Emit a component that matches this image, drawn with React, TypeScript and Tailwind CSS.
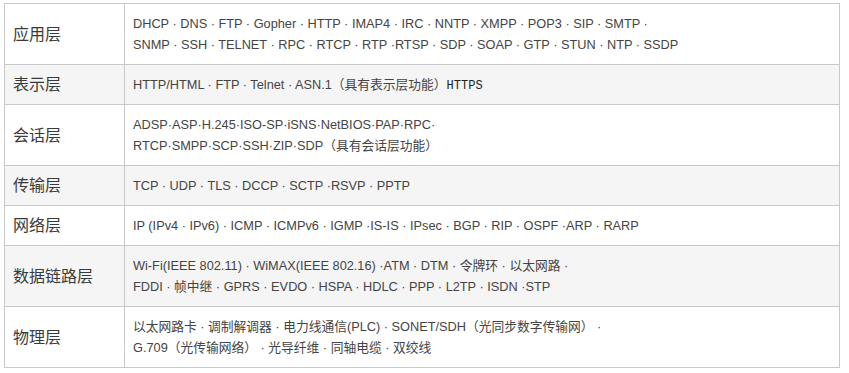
const rows: { label: string; lines: React.ReactNode[] }[] = [
  {
    label: "应用层",
    lines: [
      "DHCP · DNS · FTP · Gopher · HTTP · IMAP4 · IRC · NNTP · XMPP · POP3 · SIP · SMTP ·",
      "SNMP · SSH · TELNET · RPC · RTCP · RTP ·RTSP · SDP · SOAP · GTP · STUN · NTP · SSDP",
    ],
  },
  {
    label: "表示层",
    lines: [
      <>
        HTTP/HTML · FTP · Telnet · ASN.1（具有表示层功能）
        <span className="font-['Liberation_Mono',monospace] text-[12px] leading-none text-[#222]">HTTPS</span>
      </>,
    ],
  },
  {
    label: "会话层",
    lines: [
      "ADSP·ASP·H.245·ISO-SP·iSNS·NetBIOS·PAP·RPC·",
      "RTCP·SMPP·SCP·SSH·ZIP·SDP（具有会话层功能）",
    ],
  },
  {
    label: "传输层",
    lines: ["TCP · UDP · TLS · DCCP · SCTP ·RSVP · PPTP"],
  },
  {
    label: "网络层",
    lines: ["IP (IPv4 · IPv6) · ICMP · ICMPv6 · IGMP ·IS-IS · IPsec · BGP · RIP · OSPF ·ARP · RARP"],
  },
  {
    label: "数据链路层",
    lines: [
      "Wi-Fi(IEEE 802.11) · WiMAX(IEEE 802.16) ·ATM · DTM · 令牌环 · 以太网路 ·",
      "FDDI · 帧中继 · GPRS · EVDO · HSPA · HDLC · PPP · L2TP · ISDN ·STP",
    ],
  },
  {
    label: "物理层",
    lines: [
      "以太网路卡 · 调制解调器 · 电力线通信(PLC) · SONET/SDH（光同步数字传输网） ·",
      "G.709（光传输网络） · 光导纤维 · 同轴电缆 · 双绞线",
    ],
  },
];

export default function App() {
  return (
    <div className="min-h-screen bg-white pt-[3px] pl-[4px] font-['Liberation_Sans','Noto_Sans_CJK_SC',sans-serif] text-[#444]">
      <table className="w-[836px] border-collapse border border-[#c8c8c8]">
        <tbody>
          {rows.map((row, i) => (
            <tr key={row.label} className={i % 2 === 1 ? "bg-[#f5f5f5]" : "bg-white"}>
              <td className="w-[120px] border border-[#c8c8c8] px-2 align-middle text-[16px] leading-[21px] text-[#3a3a3a]">
                {row.label}
              </td>
              <td className="border border-[#c8c8c8] px-2 py-[9px] align-middle text-[12.75px] leading-[21px]">
                {row.lines.map((line, j) => (
                  <div key={j} className="h-[21px] overflow-hidden whitespace-nowrap">
                    {line}
                  </div>
                ))}
              </td>
            </tr>
          ))}
        </tbody>
      </table>
    </div>
  );
}
